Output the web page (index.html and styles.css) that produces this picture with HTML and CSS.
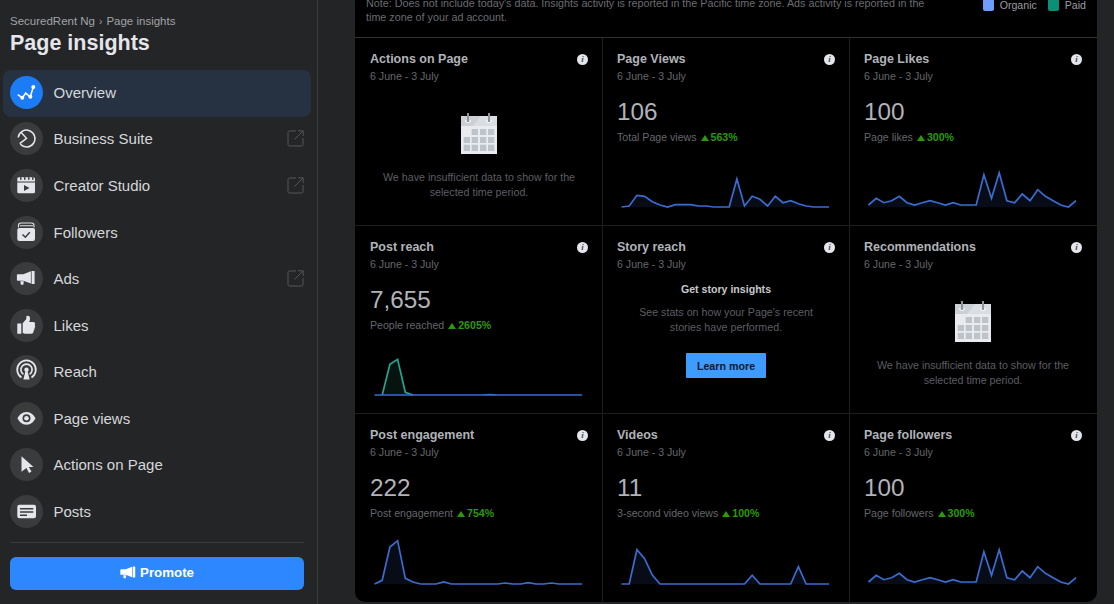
FILE: index.html
```html
<!DOCTYPE html>
<html lang="en">
<head>
    <meta charset="UTF-8">
    <meta name="viewport" content="width=device-width, initial-scale=1.0">
    <title>Page insights</title>
    <link rel="stylesheet" href="styles.css">
</head>
<body>
    <svg class="sprites" aria-hidden="true">
        <symbol id="megaphone" viewBox="0 0 33 33">
            <path d="M7.7 12.2h5.6l7.6-2.9v12.2l-7.6-2.7H7.7a.8.8 0 0 1-.8-.8v-5a.8.8 0 0 1 .8-.8z"/>
            <rect x="21.6" y="9" width="3" height="13" rx=".6"/>
            <path d="M10.3 19.2h3.6l-.6 3.6h-2.4z"/>
        </symbol>
        <symbol id="external" viewBox="0 0 17 17">
            <path d="M9 1H2.5A1.5 1.5 0 0 0 1 2.5v12A1.5 1.5 0 0 0 2.5 16h12a1.5 1.5 0 0 0 1.5-1.5V8M7.5 9.5 16 1M11 .8h5.2V6" fill="none" stroke="currentColor" stroke-width="1"/>
        </symbol>
        <symbol id="calendar" viewBox="0 0 36 41">
            <rect y="3" width="36" height="38" fill="#e9ebee"/>
            <rect y="3" width="36" height="10" fill="#ccd0d5"/>
            <path d="M12 13 20 3h16v10z" fill="#dadde1"/>
            <path d="M4.5 7a2.5 2.5 0 0 0 5 0M25.5 7a2.5 2.5 0 0 0 5 0" fill="none" stroke="#fff" stroke-width="1"/>
            <path d="M7 0v9M28 0v9" stroke="#8d949e" stroke-width="2"/>
            <path fill="#bec3c9" d="M10.7 16H17v6h-6.3zM19 16h6.3v6H19zM27 16h6.3v6H27zM2.7 24H9v6H2.7zM10.7 24H17v6h-6.3zM19 24h6.3v6H19zM27 24h6.3v6H27zM2.7 31.7H9V38H2.7zM10.7 31.7H17V38h-6.3zM19 31.7h6.3V38H19zM27 31.7h6.3V38H27z"/>
        </symbol>
    </svg>

    <div class="layout">
        <aside class="sidebar">
            <div class="breadcrumb">SecuredRent Ng<span class="sep">›</span>Page insights</div>
            <h1>Page insights</h1>

            <nav class="nav">
                <a class="nav-item active">
                    <span class="nav-icon">
                        <svg viewBox="0 0 33 33">
                            <polyline points="7.7,18.7 12.3,21.7 15.7,17.3 20.3,20.7 23.3,11" fill="none" stroke="#fff" stroke-width="1.5"/>
                            <circle cx="12.3" cy="21.7" r="2" fill="#fff"/>
                            <circle cx="15.7" cy="17.3" r="1" fill="#fff"/>
                            <circle cx="20.3" cy="20.7" r="2" fill="#fff"/>
                            <circle cx="23.3" cy="11" r="2" fill="#fff"/>
                        </svg>
                    </span>
                    Overview
                </a>
                <a class="nav-item">
                    <span class="nav-icon">
                        <svg viewBox="0 0 33 33">
                            <path d="M8.2 15.5a8.4 8.4 0 1 1 2.2 6.8M11 10.3l5.5 6-6.8 5.4" fill="none" stroke="#e4e6eb" stroke-width="1.5"/>
                        </svg>
                    </span>
                    Business Suite
                    <svg class="ext"><use href="#external"/></svg>
                </a>
                <a class="nav-item">
                    <span class="nav-icon">
                        <svg viewBox="0 0 33 33">
                            <path fill="#e4e6eb" d="M8.8 8.3h14.7a1.5 1.5 0 0 1 1.5 1.5v2.7H7.3V9.8a1.5 1.5 0 0 1 1.5-1.5zM7.3 13.5H25v9.3a1.5 1.5 0 0 1-1.5 1.5H8.8a1.5 1.5 0 0 1-1.5-1.5z"/>
                            <path fill="#3a3b3c" d="M14 16l5.5 3-5.5 3zM10 8.3h1.5v2.5H10zM14 8.3h1.5v2.5H14zM18 8.3h1.5v2.5H18zM22 8.3h1.5v2.5H22z"/>
                        </svg>
                    </span>
                    Creator Studio
                    <svg class="ext"><use href="#external"/></svg>
                </a>
                <a class="nav-item">
                    <span class="nav-icon">
                        <svg viewBox="0 0 33 33">
                            <path d="M8.5 11.5v-2A2.500 2.500 0 0 1 11 7h10.500a2.500 2.500 0 0 1 2.500 2.500v2M10 9.800h13" fill="none" stroke="#e4e6eb" stroke-width="1.100"/>
                            <path fill="#e4e6eb" d="M9.300 12H23a2 2 0 0 1 2 2v9a2 2 0 0 1-2 2H9.300a2 2 0 0 1-2-2v-9a2 2 0 0 1 2-2z"/>
                            <path d="M12.500 18.500l2.800 2.700 4.500-5" fill="none" stroke="#3a3b3c" stroke-width="1.500"/>
                        </svg>
                    </span>
                    Followers
                </a>
                <a class="nav-item">
                    <span class="nav-icon"><svg viewBox="0 0 33 33" fill="#e4e6eb"><use href="#megaphone"/></svg></span>
                    Ads
                    <svg class="ext"><use href="#external"/></svg>
                </a>
                <a class="nav-item">
                    <span class="nav-icon">
                        <svg viewBox="0 0 33 33">
                            <path fill="#e4e6eb" d="M7.300 14.500h4v10.300h-4zM12.700 14.300l3.600-4.300V8.200c0-2 3.500-1.800 3.700.7.100 1.500-.4 3-.8 4.100h3.800c2.300 0 2.600 2 1.700 3 .8 1 .6 2.300-.3 3 .4 1.200 0 2.200-.9 2.700.3 1.600-.5 3-2.300 3h-6c-1 0-1.700-.3-2.500-.9z"/>
                        </svg>
                    </span>
                    Likes
                </a>
                <a class="nav-item">
                    <span class="nav-icon">
                        <svg viewBox="0 0 33 33">
                            <path d="M11.500 22.500a9.300 9.300 0 1 1 10 0M13.400 19.300a5.600 5.600 0 1 1 6.200 0" fill="none" stroke="#e4e6eb" stroke-width="1.700"/>
                            <circle cx="16.500" cy="14.800" r="2.200" fill="#e4e6eb"/>
                            <path fill="#e4e6eb" d="M15.400 16.500h2.200l2 8h-6.200z"/>
                        </svg>
                    </span>
                    Reach
                </a>
                <a class="nav-item">
                    <span class="nav-icon">
                        <svg viewBox="0 0 33 33">
                            <path fill="#e4e6eb" fill-rule="evenodd" d="M16.500 10c4.500 0 7.500 3.300 9 6.300-1.500 3.200-4.500 6.500-9 6.500s-7.500-3.300-9-6.500c1.500-3 4.500-6.300 9-6.300zm0 2.300a4 4 0 1 0 0 8 4 4 0 0 0 0-8z"/>
                            <circle cx="16.500" cy="16.300" r="2.300" fill="#e4e6eb"/>
                        </svg>
                    </span>
                    Page views
                </a>
                <a class="nav-item">
                    <span class="nav-icon">
                        <svg viewBox="0 0 33 33">
                            <path fill="#e4e6eb" d="M11.500 8.300l12 10.600h-4.700l2.700 4.700-2.500 1.300-2.600-4.900-4.900 3.800z"/>
                        </svg>
                    </span>
                    Actions on Page
                </a>
                <a class="nav-item">
                    <span class="nav-icon">
                        <svg viewBox="0 0 33 33">
                            <path fill="#e4e6eb" fill-rule="evenodd" d="M9.300 9.800H24a2 2 0 0 1 2 2v9.400a2 2 0 0 1-2 2H9.300a2 2 0 0 1-2-2v-9.400a2 2 0 0 1 2-2zM10 13v1.500h13.300V13zm0 3.300v1.500h13.300v-1.500zm0 3.200V21h7v-1.500z"/>
                        </svg>
                    </span>
                    Posts
                </a>
            </nav>

            <div class="promote-wrap">
                <button class="promote">
                    <svg viewBox="6.5 8.5 19 15" fill="#fff"><use href="#megaphone" width="33" height="33"/></svg>
                    Promote
                </button>
            </div>
        </aside>

        <main class="main">
            <section class="panel">
                <div class="panel-head">
                    <p class="note">Note: Does not include today's data. Insights activity is reported in the Pacific time zone. Ads activity is reported in the time zone of your ad account.</p>
                    <div class="legend">
                        <span class="swatch organic"></span>Organic
                        <span class="swatch paid"></span>Paid
                    </div>
                </div>

                <div class="grid">
                    <div class="card">
                        <div class="card-title">Actions on Page <span class="info">i</span></div>
                        <div class="card-date">6 June - 3 July</div>
                        <svg class="cal"><use href="#calendar"/></svg>
                        <p class="empty">We have insufficient data to show for the selected time period.</p>
                    </div>

                    <div class="card">
                        <div class="card-title">Page Views <span class="info">i</span></div>
                        <div class="card-date">6 June - 3 July</div>
                        <div class="stat">106</div>
                        <div class="sub">Total Page views <span class="up">563%</span></div>
                        <svg class="chart" viewBox="0 0 217 52">
                            <polygon class="area" points="4.5,50 12.2,49 19.9,38.3 27.6,39.3 35.3,44.7 43,48 50.6,50 58.3,47.7 66,47.7 73.7,47.7 81.4,49 89.1,49 96.8,50 104.5,50 112.2,50 119.9,22 127.5,49 135.2,39.3 142.9,42.3 150.6,49 158.3,39.3 166,45.7 173.7,43.7 181.4,46.7 189.1,49 196.8,50 204.4,50 212.1,50"/>
                            <polyline class="line" points="4.5,50 12.2,49 19.9,38.3 27.6,39.3 35.3,44.7 43,48 50.6,50 58.3,47.7 66,47.7 73.7,47.7 81.4,49 89.1,49 96.8,50 104.5,50 112.2,50 119.9,22 127.5,49 135.2,39.3 142.9,42.3 150.6,49 158.3,39.3 166,45.7 173.7,43.7 181.4,46.7 189.1,49 196.8,50 204.4,50 212.1,50"/>
                        </svg>
                    </div>

                    <div class="card">
                        <div class="card-title">Page Likes <span class="info">i</span></div>
                        <div class="card-date">6 June - 3 July</div>
                        <div class="stat">100</div>
                        <div class="sub">Page likes <span class="up">300%</span></div>
                        <svg class="chart" viewBox="0 0 217 52">
                            <polygon class="area" points="4.5,50 4.5,48 12.2,41.3 19.9,45.7 27.6,43.7 35.3,39.3 43,45.7 50.6,48 58.3,45.7 66,43.7 73.7,45.7 81.4,48 89.1,45.7 96.8,48 104.5,48 112.2,48 119.9,17.7 127.5,41.3 135.2,15.7 142.9,43.7 150.6,45.7 158.3,37 166,43.7 173.7,32.7 181.4,39.3 189.1,43.7 196.8,48 204.4,50 212.1,43.7 212.1,50"/>
                            <polyline class="line" points="4.5,48 12.2,41.3 19.9,45.7 27.6,43.7 35.3,39.3 43,45.7 50.6,48 58.3,45.7 66,43.7 73.7,45.7 81.4,48 89.1,45.7 96.8,48 104.5,48 112.2,48 119.9,17.7 127.5,41.3 135.2,15.7 142.9,43.7 150.6,45.7 158.3,37 166,43.7 173.7,32.7 181.4,39.3 189.1,43.7 196.8,48 204.4,50 212.1,43.7"/>
                        </svg>
                    </div>

                    <div class="card">
                        <div class="card-title">Post reach <span class="info">i</span></div>
                        <div class="card-date">6 June - 3 July</div>
                        <div class="stat">7,655</div>
                        <div class="sub">People reached <span class="up">2605%</span></div>
                        <svg class="chart" viewBox="0 0 217 52">
                            <polygon class="area-paid" points="12.2,50 19.9,19.3 27.6,14.3 35.3,47.3 43,50"/>
                            <polyline class="line-paid" points="12.2,50 19.9,19.3 27.6,14.3 35.3,47.3 43,50"/>
                            <polyline class="line" points="4.5,50 112.2,50 119.9,49.7 127.5,50 212.1,50"/>
                        </svg>
                    </div>

                    <div class="card">
                        <div class="card-title">Story reach <span class="info">i</span></div>
                        <div class="card-date">6 June - 3 July</div>
                        <div class="story-title">Get story insights</div>
                        <p class="empty story-text">See stats on how your Page's recent stories have performed.</p>
                        <button class="learn">Learn more</button>
                    </div>

                    <div class="card">
                        <div class="card-title">Recommendations <span class="info">i</span></div>
                        <div class="card-date">6 June - 3 July</div>
                        <svg class="cal"><use href="#calendar"/></svg>
                        <p class="empty">We have insufficient data to show for the selected time period.</p>
                    </div>

                    <div class="card">
                        <div class="card-title">Post engagement <span class="info">i</span></div>
                        <div class="card-date">6 June - 3 July</div>
                        <div class="stat">222</div>
                        <div class="sub">Post engagement <span class="up">754%</span></div>
                        <svg class="chart" viewBox="0 0 217 52">
                            <polygon class="area" points="4.5,50 12.2,46.3 19.9,13 27.6,6.7 35.3,44.3 43,48 50.6,50 66,50 73.7,48 81.4,50 127.5,50 135.2,49 142.9,50 150.6,50 158.3,48.7 166,50 173.7,50 181.4,49 189.1,50 212.1,50"/>
                            <polyline class="line" points="4.5,50 12.2,46.3 19.9,13 27.6,6.7 35.3,44.3 43,48 50.6,50 66,50 73.7,48 81.4,50 127.5,50 135.2,49 142.9,50 150.6,50 158.3,48.7 166,50 173.7,50 181.4,49 189.1,50 212.1,50"/>
                        </svg>
                    </div>

                    <div class="card">
                        <div class="card-title">Videos <span class="info">i</span></div>
                        <div class="card-date">6 June - 3 July</div>
                        <div class="stat">11</div>
                        <div class="sub">3-second video views <span class="up">100%</span></div>
                        <svg class="chart" viewBox="0 0 217 52">
                            <polygon class="area" points="4.5,50 12.2,50 19.9,15.7 27.6,24.7 35.3,41 43,50 127.5,50 135.2,41.3 142.9,50 173.7,50 181.4,32.7 189.1,50 212.1,50"/>
                            <polyline class="line" points="4.5,50 12.2,50 19.9,15.7 27.6,24.7 35.3,41 43,50 127.5,50 135.2,41.3 142.9,50 173.7,50 181.4,32.7 189.1,50 212.1,50"/>
                        </svg>
                    </div>

                    <div class="card">
                        <div class="card-title">Page followers <span class="info">i</span></div>
                        <div class="card-date">6 June - 3 July</div>
                        <div class="stat">100</div>
                        <div class="sub">Page followers <span class="up">300%</span></div>
                        <svg class="chart" viewBox="0 0 217 52">
                            <polygon class="area" points="4.5,50 4.5,48 12.2,41.3 19.9,45.7 27.6,43.7 35.3,39.3 43,45.7 50.6,48 58.3,45.7 66,43.7 73.7,45.7 81.4,48 89.1,45.7 96.8,48 104.5,48 112.2,48 119.9,17.7 127.5,41.3 135.2,15.7 142.9,43.7 150.6,45.7 158.3,37 166,43.7 173.7,32.7 181.4,39.3 189.1,43.7 196.8,48 204.4,50 212.1,43.7 212.1,50"/>
                            <polyline class="line" points="4.5,48 12.2,41.3 19.9,45.7 27.6,43.7 35.3,39.3 43,45.7 50.6,48 58.3,45.7 66,43.7 73.7,45.7 81.4,48 89.1,45.7 96.8,48 104.5,48 112.2,48 119.9,17.7 127.5,41.3 135.2,15.7 142.9,43.7 150.6,45.7 158.3,37 166,43.7 173.7,32.7 181.4,39.3 189.1,43.7 196.8,48 204.4,50 212.1,43.7"/>
                        </svg>
                    </div>
                </div>
            </section>
        </main>
    </div>
</body>
</html>
```

FILE: styles.css
```css
* {
    box-sizing: border-box;
}

html, body {
    height: 100%;
    margin: 0;
    overflow: hidden;
}

body {
    font-family: "Liberation Sans", Arial, sans-serif;
    background: #232425;
    color: #e4e6eb;
}

.sprites {
    display: none;
}

.layout {
    display: flex;
    height: 604px;
}

/* sidebar */

.sidebar {
    width: 318px;
    flex-shrink: 0;
    background: #242526;
    border-right: 1px solid #3a3b3c;
    padding-top: 14px;
}

.breadcrumb {
    margin-left: 10px;
    font-size: 11.5px;
    line-height: 15px;
    color: #a0a3a8;
}

.sep {
    margin: 0 4px;
    font-size: 10px;
}

h1 {
    margin: 1px 0 0 10px;
    font-size: 21.5px;
    line-height: 26px;
    font-weight: bold;
    color: #e4e6eb;
}

.nav {
    margin: 13.5px 0 0 3px;
    width: 308px;
}

.nav-item {
    display: flex;
    align-items: center;
    height: 46.55px;
    padding: 0 7px 0.75px;
    gap: 10.5px;
    font-size: 15px;
    color: #d5d7da;
    border-radius: 8px;
}

.nav-item.active {
    height: 47.05px;
    margin-bottom: -0.5px;
    background: #263241;
}

.nav-icon {
    display: flex;
    width: 33px;
    height: 33px;
    border-radius: 50%;
    background: #3a3b3c;
}

.active .nav-icon {
    background: #1b7cf5;
}

.nav-icon svg {
    width: 33px;
    height: 33px;
}

.ext {
    width: 17px;
    height: 17px;
    margin-left: auto;
    color: #53565a;
}

.promote-wrap {
    margin: 7px 13px 0 10px;
    padding-top: 14px;
    border-top: 1px solid #3a3b3c;
}

.promote {
    display: flex;
    align-items: center;
    justify-content: center;
    gap: 4px;
    width: 100%;
    height: 33px;
    padding: 0 0 2px;
    border: none;
    border-radius: 6px;
    background: #2d88ff;
    color: #fff;
    font-family: inherit;
    font-size: 13.3px;
    font-weight: bold;
}

.promote svg {
    width: 16px;
    height: 13px;
}

/* insights panel */

.main {
    flex: 1;
    padding: 0 17px 2px 37px;
    overflow: hidden;
}

.panel {
    height: 602px;
    background: #000;
    border-radius: 0 0 10px 10px;
    overflow: hidden;
}

.panel-head {
    display: flex;
    justify-content: space-between;
    height: 38px;
    padding: 0 11px;
    border-bottom: 1px solid #2f3031;
    overflow: hidden;
}

.note {
    margin: -4px 0 0;
    width: 570px;
    font-size: 10.75px;
    line-height: 14px;
    color: #6a6c70;
}

.legend {
    display: flex;
    align-items: flex-start;
    margin-top: -1px;
    height: 14px;
    font-size: 10.6px;
    line-height: 12px;
    color: #9a9ca0;
}

.swatch {
    width: 11px;
    height: 12px;
    margin: 0 6px 0 11px;
    border-radius: 2px;
}

.organic {
    background: #6f9cff;
}

.paid {
    background: #0b8f75;
}

.grid {
    display: grid;
    grid-template-columns: 247px 247px 248px;
    grid-auto-rows: 188px;
}

.card {
    display: flex;
    flex-direction: column;
    padding: 12px 14px 0 15px;
    border-bottom: 1px solid #1d1e20;
}

.card:nth-child(3n+2), .card:nth-child(3n) {
    padding-left: 14px;
    border-left: 1px solid #1d1e20;
}

.card:nth-child(3n) {
    padding-right: 15px;
}

.card:nth-child(n+7) {
    border-bottom: none;
}

.card-title {
    display: flex;
    justify-content: space-between;
    align-items: center;
    font-size: 12.5px;
    line-height: 18px;
    font-weight: bold;
    color: #b0b3b8;
}

.info {
    width: 11px;
    height: 11px;
    margin-top: 1px;
    border-radius: 50%;
    background: #e4e6eb;
    color: #4b4c4f;
    font-family: "Liberation Serif", serif;
    font-size: 9px;
    font-style: italic;
    line-height: 11px;
    text-align: center;
}

.card-date {
    font-size: 10.6px;
    line-height: 17px;
    color: #65676b;
}

.stat {
    margin-top: 10px;
    font-size: 24.3px;
    line-height: 34px;
    color: #b0b3b8;
}

.sub {
    display: flex;
    align-items: center;
    margin-top: 1px;
    font-size: 10.6px;
    line-height: 15px;
    color: #65676b;
}

.up {
    display: flex;
    align-items: center;
    margin-left: 4px;
    font-weight: bold;
    color: #2b9a0a;
}

.up::before {
    content: "";
    margin-right: 2px;
    border-left: 4px solid transparent;
    border-right: 4px solid transparent;
    border-bottom: 6px solid #2b9a0a;
}

.chart {
    width: 217px;
    height: 52px;
    margin-top: auto;
    margin-bottom: 16px;
    flex-shrink: 0;
}

.line {
    fill: none;
    stroke: #3b6cd0;
    stroke-width: 1.7;
}

.area {
    fill: #080c16;
}

.line-paid {
    fill: none;
    stroke: #25a391;
    stroke-width: 1.7;
}

.area-paid {
    fill: #07130f;
}

.cal {
    align-self: center;
    width: 36px;
    height: 41px;
    margin-top: 28px;
    flex-shrink: 0;
}

.empty {
    margin: 16px 0 0;
    font-size: 10.7px;
    line-height: 15px;
    text-align: center;
    color: #5c5e62;
}

.story-title {
    margin-top: 9px;
    font-size: 10.6px;
    line-height: 14px;
    font-weight: bold;
    text-align: center;
    color: #c8cacd;
}

.story-text {
    margin: 9px 14px 0;
}

.learn {
    align-self: center;
    width: 80px;
    height: 25px;
    margin-top: 18px;
    border: none;
    border-radius: 1px;
    background: #3e9bff;
    color: #0b1a2e;
    font-family: inherit;
    font-size: 10.7px;
    font-weight: bold;
}
```
